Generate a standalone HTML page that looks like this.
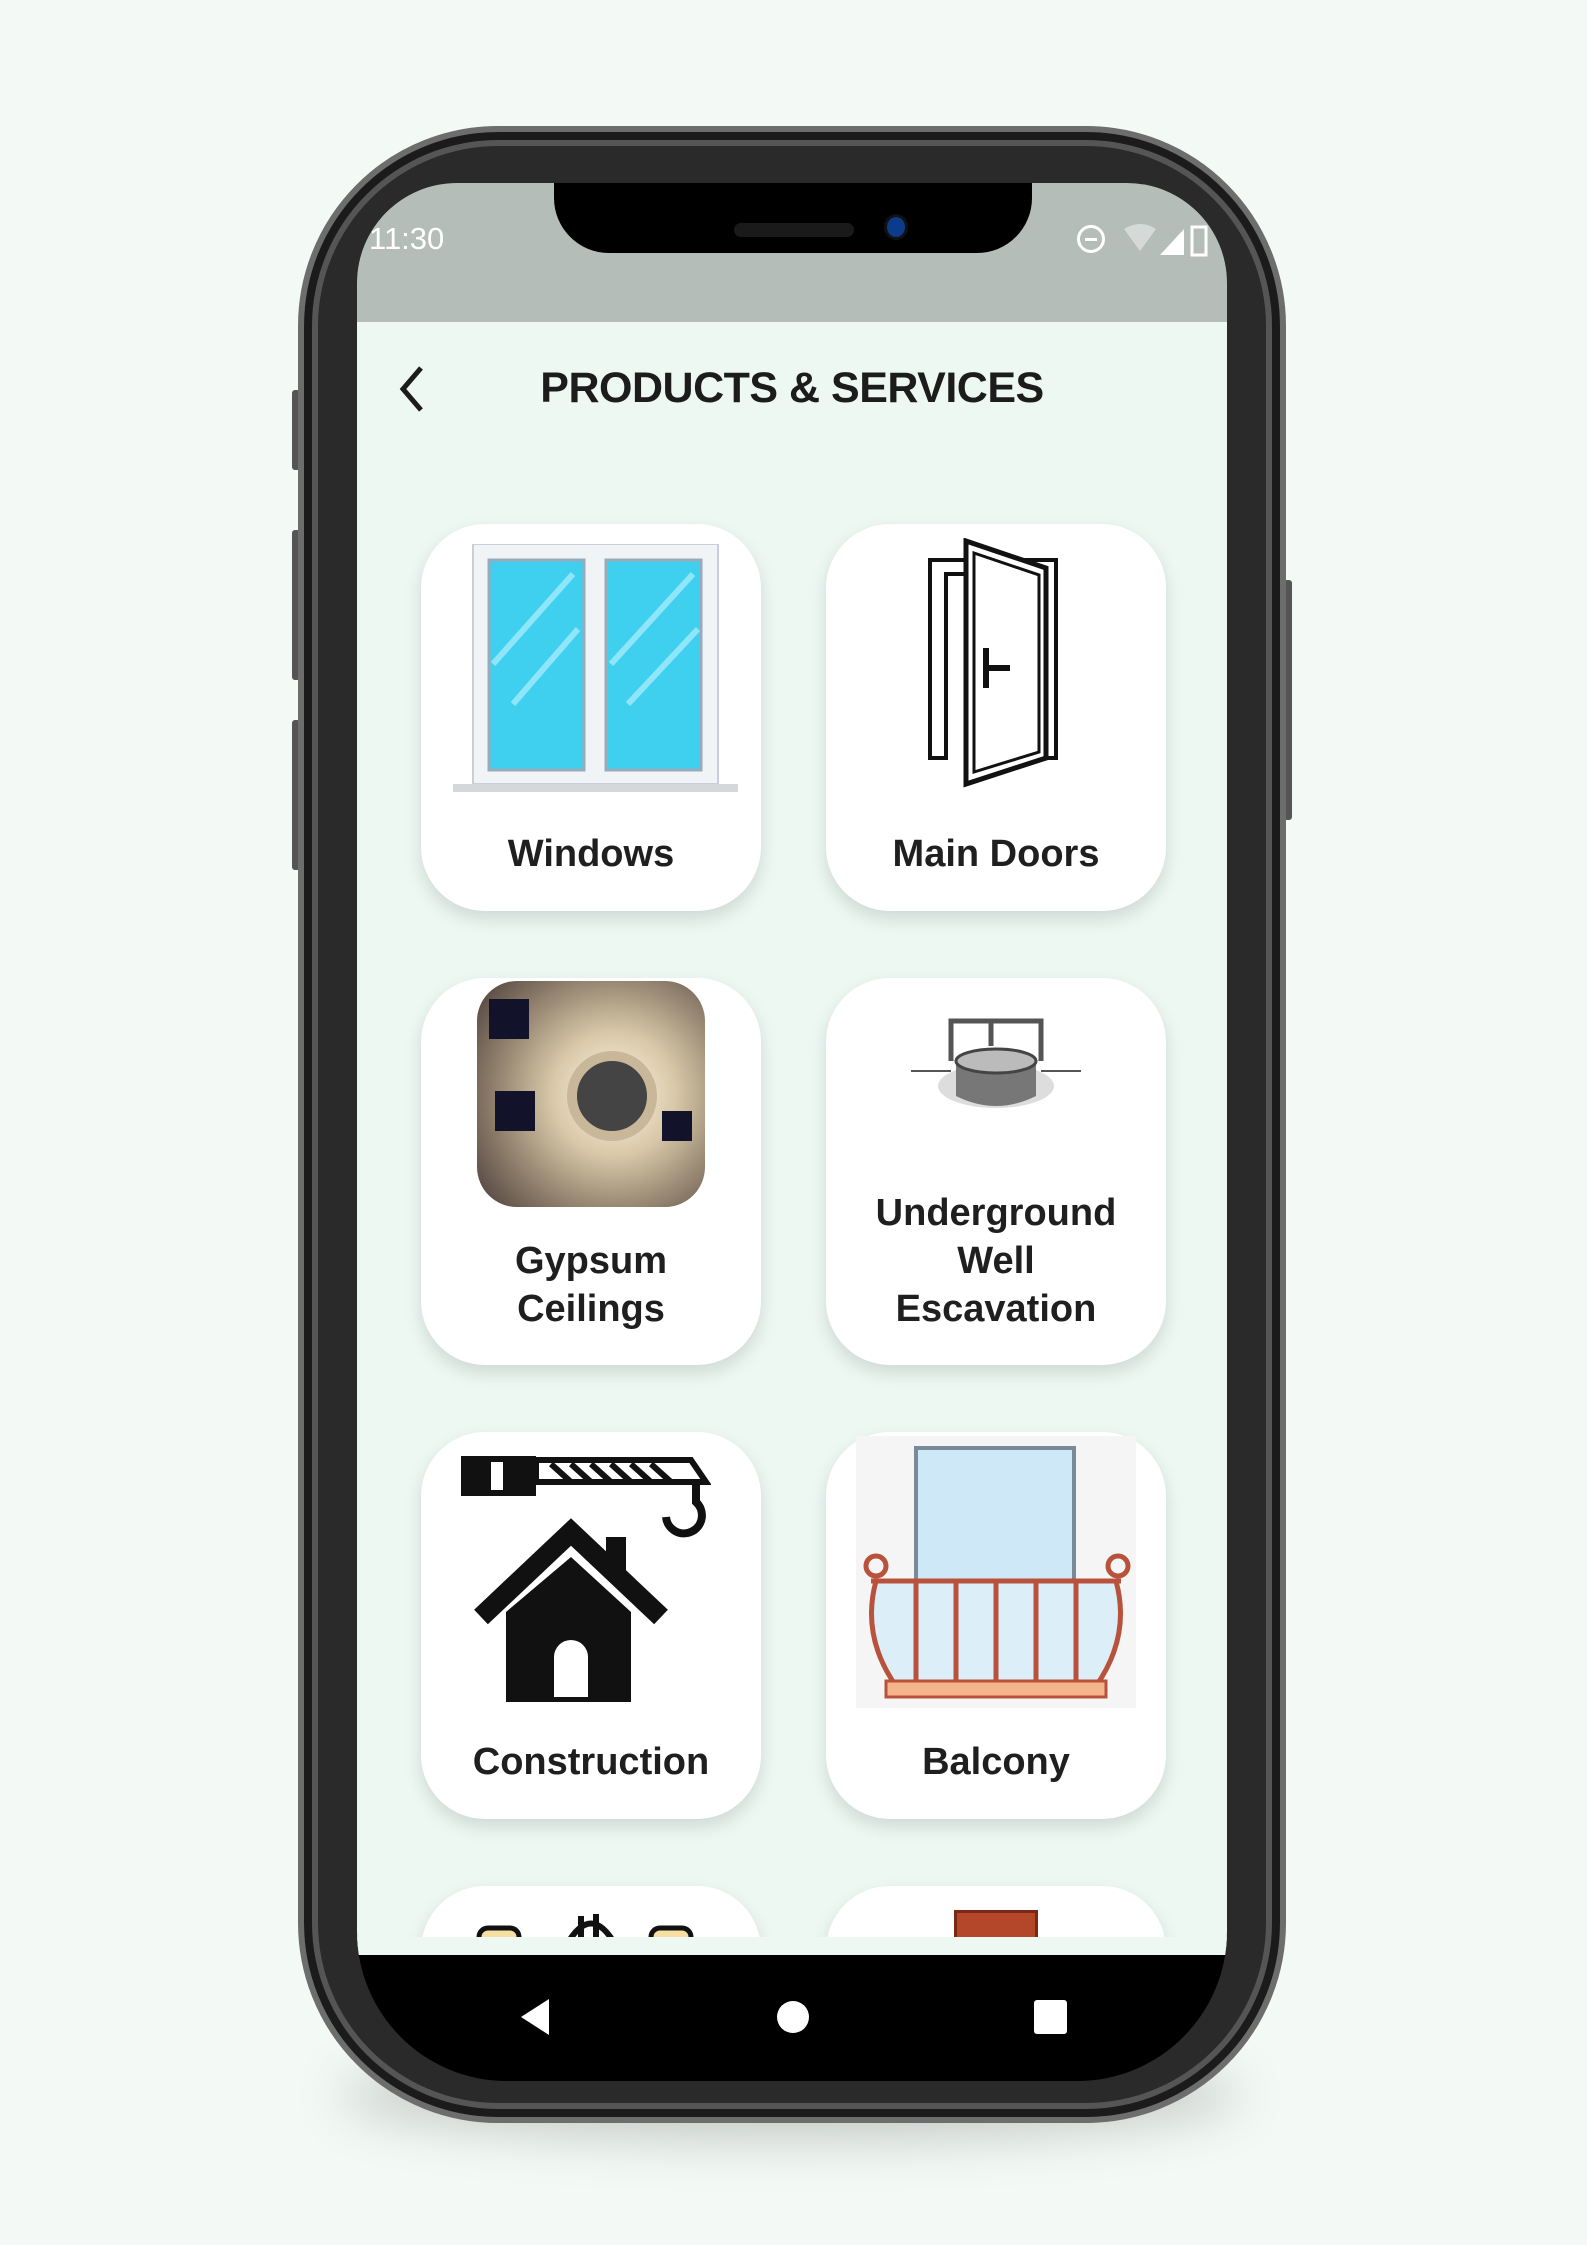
<!DOCTYPE html>
<html><head><meta charset="utf-8">
<style>
*{margin:0;padding:0;box-sizing:border-box}
body{width:1587px;height:2245px;background:#f3f9f5;position:relative;overflow:hidden;font-family:"Liberation Sans",Arial,sans-serif}
.shadow{position:absolute;left:340px;top:2050px;width:900px;height:90px;border-radius:50%;background:rgba(0,0,0,0.18);filter:blur(25px)}
.phone{position:absolute;left:298px;top:126px;width:988px;height:1997px;border-radius:200px;background:#2a2a2a;border:6px solid #6d6d6d;box-shadow:inset 0 0 0 8px #1b1b1b,inset 0 0 0 14px #555}
.btn{position:absolute;background:#555;width:8px;border-radius:3px}
.screen{position:absolute;left:357px;top:183px;width:870px;height:1898px;border-radius:100px 100px 150px 150px;background:#000;overflow:hidden}
.status{position:absolute;left:0;top:0;width:870px;height:139px;background:#b4bdb8}
.notch{position:absolute;left:197px;top:-10px;width:478px;height:80px;background:#000;border-radius:0 0 55px 55px}
.app{position:absolute;left:0;top:139px;width:870px;height:1633px;background:#edf8f3;overflow:hidden}
.title{position:absolute;left:0;width:870px;top:42px;text-align:center;font-size:43px;font-weight:bold;color:#1c1c1c;letter-spacing:-0.5px}
.card{position:absolute;width:340px;height:387px;background:#fff;border-radius:64px;box-shadow:0 8px 18px rgba(0,0,0,0.13)}
.lbl{position:absolute;left:0;width:340px;text-align:center;font-size:38px;font-weight:bold;color:#1f1f1f;line-height:48px}
.nav{position:absolute;left:0;top:1772px;width:870px;height:126px;background:#000}
</style></head><body>
<div class="shadow"></div>
<div class="btn" style="left:292px;top:390px;height:80px"></div>
<div class="btn" style="left:292px;top:530px;height:150px"></div>
<div class="btn" style="left:292px;top:720px;height:150px"></div>
<div class="btn" style="left:1284px;top:580px;height:240px"></div>
<div class="phone"></div>
<div class="screen">
  <div class="status">
    <div style="position:absolute;left:12px;top:38px;font-size:31px;color:#fff">11:30</div>
    <div style="position:absolute;left:720px;top:42px;width:28px;height:28px;border:3px solid #fff;border-radius:50%"><div style="position:absolute;left:5px;top:10px;width:12px;height:3px;background:#fff"></div></div>
    <svg style="position:absolute;left:765px;top:40px" width="100" height="36"><path d="M2 6 Q18 -4 34 6 L18 28Z" fill="#d5dad8"/><path d="M38 32 L62 6 L62 32Z" fill="#fff"/><rect x="70" y="4" width="14" height="28" fill="none" stroke="#fff" stroke-width="3"/></svg>
  </div>
  <div class="notch"><div style="position:absolute;left:180px;top:50px;width:120px;height:14px;border-radius:7px;background:#1a1a1a"></div><div style="position:absolute;left:333px;top:44px;width:18px;height:20px;border-radius:50%;background:#0b3b8a;box-shadow:0 0 0 3px #111"></div></div>
  <div class="app">
    <svg style="position:absolute;left:40px;top:42px" width="30" height="50"><path d="M24 4 L6 25 L24 46" fill="none" stroke="#1c1c1c" stroke-width="5"/></svg>
    <div class="title">PRODUCTS &amp; SERVICES</div>

    <div class="card" style="left:64px;top:202px">
      <svg style="position:absolute;left:32px;top:20px" width="285" height="255">
        <rect x="20" y="0" width="245" height="240" fill="#f1f4f6" stroke="#ccd" stroke-width="2"/>
        <rect x="36" y="16" width="95" height="210" fill="#3fd0f0" stroke="#9ab" stroke-width="3"/>
        <rect x="153" y="16" width="95" height="210" fill="#3fd0f0" stroke="#9ab" stroke-width="3"/>
        <path d="M40 120 L120 30 M60 160 L125 85 M158 120 L240 30 M175 160 L245 85" stroke="#8ee6f8" stroke-width="6"/>
        <rect x="0" y="240" width="285" height="8" fill="#d4d8da"/>
      </svg>
      <div class="lbl" style="top:306px">Windows</div>
    </div>
    <div class="card" style="left:469px;top:202px">
      <svg style="position:absolute;left:100px;top:14px" width="140" height="250">
        <path d="M4 22 H130 V220 H116 V36 H20 V220 H4Z" fill="none" stroke="#111" stroke-width="4"/>
        <path d="M40 3 L120 30 V220 L40 246Z" fill="#fff" stroke="#111" stroke-width="5"/>
        <path d="M48 15 L113 37 V214 L48 234Z" fill="none" stroke="#111" stroke-width="3"/>
        <path d="M60 110 V150 M60 130 H84" stroke="#111" stroke-width="6"/>
      </svg>
      <div class="lbl" style="top:306px">Main Doors</div>
    </div>

    <div class="card" style="left:64px;top:656px">
      <div style="position:absolute;left:56px;top:3px;width:228px;height:226px;border-radius:40px;background:radial-gradient(circle at 60% 50%,#fff6e0 0,#d8c8a8 35%,#8a7a68 70%,#4a3e3a 100%);overflow:hidden">
        <div style="position:absolute;left:90px;top:70px;width:90px;height:90px;border-radius:50%;background:#444;border:10px solid #c9b79a"></div>
        <div style="position:absolute;left:12px;top:18px;width:40px;height:40px;background:#12122a"></div>
        <div style="position:absolute;left:18px;top:110px;width:40px;height:40px;background:#12122a"></div>
        <div style="position:absolute;left:185px;top:130px;width:30px;height:30px;background:#12122a"></div>
      </div>
      <div class="lbl" style="top:259px">Gypsum<br>Ceilings</div>
    </div>
    <div class="card" style="left:469px;top:656px">
      <svg style="position:absolute;left:85px;top:38px" width="170" height="100">
        <path d="M0 55 H40 M130 55 H170" stroke="#555" stroke-width="2"/>
        <ellipse cx="85" cy="70" rx="58" ry="22" fill="#ddd"/>
        <path d="M45 45 V80 Q85 100 125 80 V45Z" fill="#777"/>
        <ellipse cx="85" cy="45" rx="40" ry="12" fill="#bbb" stroke="#444" stroke-width="3"/>
        <path d="M40 45 V5 H130 V45 M80 5 V30" stroke="#555" stroke-width="5" fill="none"/>
      </svg>
      <div class="lbl" style="top:211px">Underground<br>Well<br>Escavation</div>
    </div>

    <div class="card" style="left:64px;top:1110px">
      <svg style="position:absolute;left:40px;top:10px" width="250" height="260">
        <rect x="0" y="14" width="75" height="40" fill="#111"/><rect x="30" y="20" width="12" height="28" fill="#fff"/>
        <path d="M75 18 H230 L245 40 H75Z M90 22 L110 40 M110 22 L130 40 M130 22 L150 40 M150 22 L170 40 M170 22 L190 40 M190 22 L210 40" stroke="#111" stroke-width="6" fill="none"/>
        <path d="M235 42 V60 A18 18 0 1 1 205 75" stroke="#111" stroke-width="8" fill="none"/>
        <path d="M20 175 L110 90 L200 175" stroke="#111" stroke-width="20" fill="none"/>
        <path d="M45 170 V265 H170 V170 L110 115Z" fill="#111"/>
        <path d="M93 255 V215 A17 17 0 0 1 127 215 V255Z" fill="#fff"/>
        <rect x="145" y="95" width="20" height="40" fill="#111"/>
      </svg>
      <div class="lbl" style="top:306px">Construction</div>
    </div>
    <div class="card" style="left:469px;top:1110px">
      <svg style="position:absolute;left:30px;top:4px" width="280" height="272">
        <rect x="0" y="0" width="280" height="272" fill="#f5f5f5"/>
        <rect x="60" y="12" width="158" height="160" fill="#cfe8f8" stroke="#7a8a99" stroke-width="4"/>
        <path d="M20 145 Q5 200 40 250 H240 Q275 200 260 145" fill="#dceff8" stroke="#b8523c" stroke-width="5"/>
        <path d="M15 145 H265 M60 145 V250 M100 145 V250 M140 145 V250 M180 145 V250 M220 145 V250" stroke="#b8523c" stroke-width="5"/>
        <circle cx="20" cy="130" r="10" fill="none" stroke="#b8523c" stroke-width="5"/><circle cx="262" cy="130" r="10" fill="none" stroke="#b8523c" stroke-width="5"/>
        <rect x="30" y="245" width="220" height="16" fill="#f4b58a" stroke="#b8523c" stroke-width="3"/>
      </svg>
      <div class="lbl" style="top:306px">Balcony</div>
    </div>

    <div class="card" style="left:64px;top:1564px">
      <svg style="position:absolute;left:50px;top:20px" width="240" height="40"><rect x="8" y="22" width="40" height="20" rx="9" fill="#f6dfa0" stroke="#111" stroke-width="5"/><path d="M95 40 Q120 -5 145 40 M110 40 V10 M125 40 V8" stroke="#111" stroke-width="6" fill="none"/><rect x="180" y="22" width="40" height="20" rx="9" fill="#f6dfa0" stroke="#111" stroke-width="5"/></svg>
    </div>
    <div class="card" style="left:469px;top:1564px">
      <div style="position:absolute;left:128px;top:24px;width:84px;height:40px;background:#b4472a;border:3px solid #7a2a14"></div>
    </div>
    <div style="position:absolute;left:0;top:1615px;width:870px;height:40px;background:#edf8f3"></div>
  </div>
  <div class="nav">
    <svg style="position:absolute;left:160px;top:40px" width="40" height="45"><path d="M32 4 V40 L4 22Z" fill="#fff"/></svg>
    <div style="position:absolute;left:420px;top:46px;width:32px;height:32px;border-radius:50%;background:#fff"></div>
    <div style="position:absolute;left:677px;top:45px;width:33px;height:34px;border-radius:3px;background:#fff"></div>
  </div>
</div>
</body></html>
